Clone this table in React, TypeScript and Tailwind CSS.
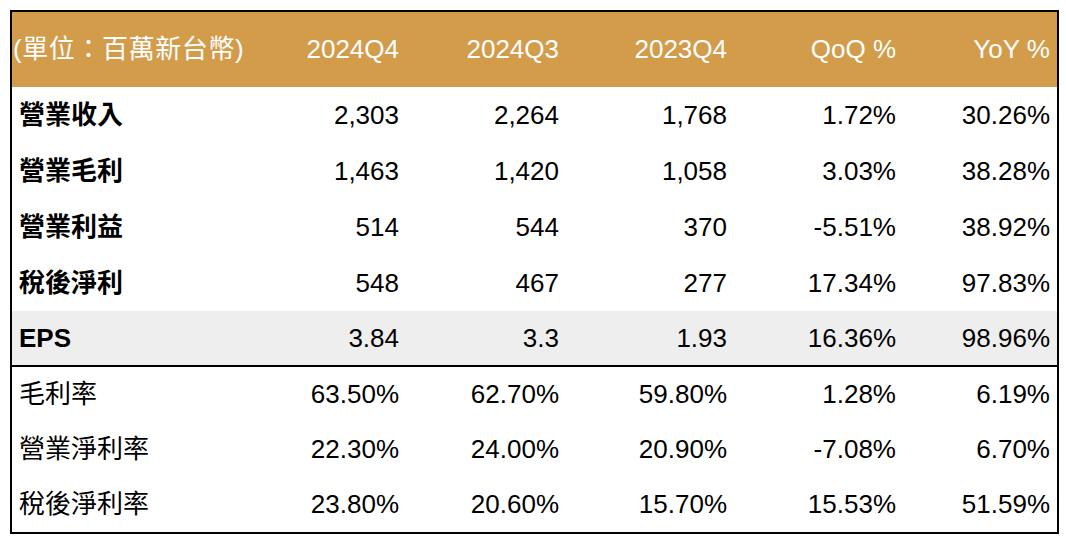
const font = {
  fontFamily: '"Liberation Sans", "Noto Sans CJK TC", sans-serif',
}

const cols = 'grid grid-cols-[234px_160px_160px_168px_169px_154px]'
const cell = 'pr-[7px] text-right'

type Row = { label: string; values: string[]; bold?: boolean; shade?: boolean; rule?: boolean }

const rows: Row[] = [
  { label: '營業收入', values: ['2,303', '2,264', '1,768', '1.72%', '30.26%'], bold: true },
  { label: '營業毛利', values: ['1,463', '1,420', '1,058', '3.03%', '38.28%'], bold: true },
  { label: '營業利益', values: ['514', '544', '370', '-5.51%', '38.92%'], bold: true },
  { label: '稅後淨利', values: ['548', '467', '277', '17.34%', '97.83%'], bold: true },
  { label: 'EPS', values: ['3.84', '3.3', '1.93', '16.36%', '98.96%'], bold: true, shade: true, rule: true },
  { label: '毛利率', values: ['63.50%', '62.70%', '59.80%', '1.28%', '6.19%'] },
  { label: '營業淨利率', values: ['22.30%', '24.00%', '20.90%', '-7.08%', '6.70%'] },
  { label: '稅後淨利率', values: ['23.80%', '20.60%', '15.70%', '15.53%', '51.59%'] },
]

export default function App() {
  return (
    <div className="h-[546px] w-[1066px] bg-white pl-[10px] pt-[10px]" style={font}>
      <div className="w-[1049px] border-2 border-black text-[26px] text-black">
        <div className={`${cols} h-[75px] items-center bg-[#d39c4b] text-white`}>
          <div className="pl-[1px] tracking-[0.6px] whitespace-nowrap">(單位：百萬新台幣)</div>
          <div className={cell}>2024Q4</div>
          <div className={cell}>2024Q3</div>
          <div className={cell}>2023Q4</div>
          <div className={cell}>QoQ %</div>
          <div className={cell}>YoY %</div>
        </div>
        {rows.map((r, idx) => (
          <div
            key={r.label}
            className={`${cols} ${idx < 5 ? 'h-[56px]' : 'h-[55px]'} items-center ${
              r.shade ? 'bg-[#eeeeee]' : ''
            } ${r.rule ? 'border-b-2 border-black' : ''}`}
          >
            <div className={`pl-[7px] ${r.bold ? 'font-bold' : ''}`}>{r.label}</div>
            {r.values.map((v, i) => (
              <div key={i} className={cell}>
                {v}
              </div>
            ))}
          </div>
        ))}
      </div>
    </div>
  )
}
